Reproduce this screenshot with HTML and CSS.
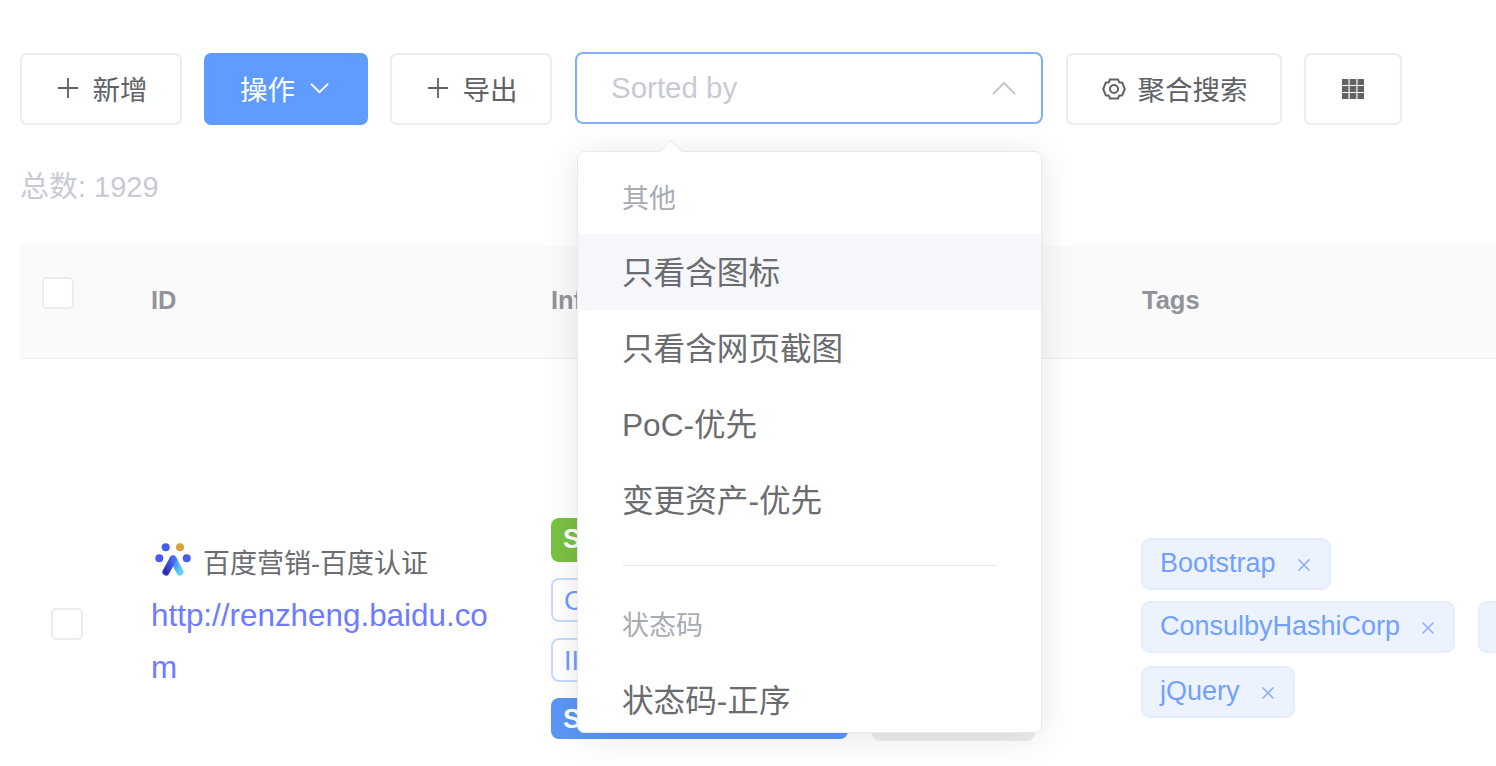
FILE: index.html
```html
<!DOCTYPE html>
<html lang="zh-CN">
<head>
<meta charset="utf-8">
<title>资产列表</title>
<link rel="stylesheet" href="styles.css">
</head>
<body>
<main class="page">
  <div class="toolbar">
    <button class="btn btn-add"><svg class="ic-plus" viewBox="0 0 24 24"><path d="M12 1v22M1 12h22"/></svg>新增</button>
    <button class="btn btn-primary">操作<svg class="ic-chev" viewBox="0 0 24 14"><path d="M2 2l10 10L22 2"/></svg></button>
    <button class="btn btn-add"><svg class="ic-plus" viewBox="0 0 24 24"><path d="M12 1v22M1 12h22"/></svg>导出</button>
    <div class="select-wrap">
      <div class="select">
        <span class="placeholder">Sorted by</span>
        <svg class="ic-up" viewBox="0 0 26 16"><path d="M2 14L13 3l11 11"/></svg>
      </div>
      <div class="dropdown">
        <span class="arrow"></span>
        <div class="menu">
          <div class="group-title">其他</div>
          <div class="item hover">只看含图标</div>
          <div class="item">只看含网页截图</div>
          <div class="item">PoC-优先</div>
          <div class="item">变更资产-优先</div>
          <div class="divider"></div>
          <div class="group-title second">状态码</div>
          <div class="item">状态码-正序</div>
        </div>
      </div>
    </div>
    <button class="btn btn-search"><svg class="ic-gear" viewBox="0 0 24 24"><path d="M8 2.500h8l1.200 2.800 3 .4L22.800 12l-2.600 6.300-3 .4L16 21.500H8l-1.200-2.800-3-.4L1.200 12l2.600-6.300 3-.4z"/><circle cx="12" cy="12" r="4"/></svg>聚合搜索</button>
    <button class="btn btn-grid"><svg class="ic-grid" viewBox="0 0 22 20"><path d="M0 0h6.500v6H0zM7.700 0h6.600v6H7.700zM15.500 0H22v6h-6.500zM0 7h6.500v6H0zM7.700 7h6.600v6H7.700zM15.500 7H22v6h-6.500zM0 14h6.500v6H0zM7.700 14h6.600v6H7.700zM15.500 14H22v6h-6.500z"/></svg></button>
  </div>

  <div class="total">总数: 1929</div>

  <div class="table">
    <div class="thead">
      <div class="col-check"><span class="checkbox head-check"></span></div>
      <div class="col-id th">ID</div>
      <div class="col-info th">Info</div>
      <div class="col-status th"></div>
      <div class="col-tags th th-tags">Tags</div>
    </div>
    <div class="tbody">
      <div class="col-check cell-check"><span class="checkbox"></span></div>
      <div class="col-id cell-id">
        <div class="site">
          <svg class="logo" viewBox="0 0 36 34">
            <defs>
              <linearGradient id="lg-left" x1="0" y1="1" x2="1" y2="0"><stop offset="0" stop-color="#2a2fb8"/><stop offset="1" stop-color="#4a6cf0"/></linearGradient>
              <linearGradient id="lg-right" x1="0" y1="0" x2="1" y2="1"><stop offset="0" stop-color="#4a78f0"/><stop offset="1" stop-color="#5cd4f0"/></linearGradient>
            </defs>
            <circle cx="10.700" cy="4.300" r="4" fill="#4a5cf0"/>
            <circle cx="25" cy="4.300" r="4" fill="#d9a03c"/>
            <circle cx="4.300" cy="15.300" r="4" fill="#4a5cf0"/>
            <circle cx="31.700" cy="15.300" r="4" fill="#4a5cf0"/>
            <path d="M18 16l7 13" stroke="url(#lg-right)" stroke-width="7" stroke-linecap="round" fill="none"/>
            <path d="M18 16l-7 13" stroke="url(#lg-left)" stroke-width="7" stroke-linecap="round" fill="none"/>
          </svg>
          <span>百度营销-百度认证</span>
        </div>
        <a class="url">http://renzheng.baidu.com</a>
      </div>
      <div class="col-info cell-info">
        <span class="tag tag-green">S</span>
        <span class="tag tag-line">C</span>
        <span class="tag tag-line">II</span>
        <span class="tag tag-blue">S</span>
      </div>
      <div class="col-status cell-status">
        <span class="tag-grey"></span>
      </div>
      <div class="col-tags cell-tags">
        <div class="tag-row"><span class="chip">Bootstrap<svg class="x" viewBox="0 0 14 14"><path d="M1.500 1.500l11 11M12.500 1.500l-11 11"/></svg></span></div>
        <div class="tag-row"><span class="chip">ConsulbyHashiCorp<svg class="x" viewBox="0 0 14 14"><path d="M1.500 1.500l11 11M12.500 1.500l-11 11"/></svg></span><span class="chip chip-cut"></span></div>
        <div class="tag-row"><span class="chip">jQuery<svg class="x" viewBox="0 0 14 14"><path d="M1.500 1.500l11 11M12.500 1.500l-11 11"/></svg></span></div>
      </div>
    </div>
  </div>
</main>
</body>
</html>
```
FILE: styles.css
```css
* { box-sizing: border-box; }
html, body {
  margin: 0;
  height: 100%;
  overflow: hidden;
  background: #fff;
}
body {
  font-family: "Liberation Sans", "Noto Sans CJK SC", sans-serif;
  color: #606266;
}
.page {
  width: 1496px;
  height: 766px;
  overflow: hidden;
  padding: 53px 0 0 20px;
}
.toolbar {
  display: flex;
  align-items: flex-start;
  gap: 22px;
}
.btn {
  height: 72px;
  border: 2px solid #ebebf2;
  border-radius: 7px;
  background: #fff;
  color: #606266;
  font: 27.500px "Liberation Sans", "Noto Sans CJK SC", sans-serif;
  display: flex;
  align-items: center;
  justify-content: center;
  padding: 0 0 3px;
}
.btn-add { width: 162px; gap: 14px; padding-left: 2px; }
.btn-primary {
  width: 164px;
  gap: 14px;
  padding-right: 2px;
  background: #609bff;
  border-color: #609bff;
  color: #fff;
}
.btn-search { width: 216px; gap: 12px; margin-left: 1px; padding-left: 1px; }
.btn-grid { width: 98px; }
.ic-plus { width: 22px; height: 22px; fill: none; stroke: #606266; stroke-width: 2; }
.ic-chev { width: 21px; height: 12px; fill: none; stroke: #fff; stroke-width: 2.200; }
.ic-gear { width: 24px; height: 24px; margin-top: 2px; fill: none; stroke: #606266; stroke-width: 2; }
.ic-grid { width: 22px; height: 20px; margin-top: 2px; fill: #606266; }

.select-wrap { position: relative; width: 468px; margin-left: 1px; }
.select {
  height: 72px;
  margin-top: -1px;
  border: 2px solid #7fb0fb;
  border-radius: 8px;
  display: flex;
  align-items: center;
  justify-content: space-between;
  padding: 0 24px 0 34px;
  background: #fff;
}
.placeholder { font-size: 29.500px; color: #c8cad3; }
.ic-up { width: 26px; height: 16px; fill: none; stroke: #c4c6cf; stroke-width: 2; }

.dropdown {
  position: absolute;
  z-index: 5;
  left: 2px;
  top: 98px;
  width: 465px;
  height: 582px;
  background: #fff;
  border: 1px solid #e8e9f0;
  border-radius: 7px;
  box-shadow: 0 4px 36px rgba(0, 0, 0, 0.1);
}
.arrow {
  position: absolute;
  left: 85px;
  top: -9px;
  width: 16px;
  height: 16px;
  background: #fff;
  border-left: 1px solid #e8e9f0;
  border-top: 1px solid #e8e9f0;
  transform: rotate(45deg);
}
.menu {
  position: relative;
  height: 100%;
  overflow: hidden;
  border-radius: 7px;
  padding-top: 25px;
}
.group-title {
  height: 44px;
  line-height: 44px;
  padding-left: 44px;
  font-size: 27px;
  color: #a8abb2;
  margin-bottom: 13px;
}
.group-title.second { margin-bottom: 14px; }
.item {
  height: 76px;
  line-height: 78px;
  padding-left: 44px;
  font-size: 31.600px;
  color: #6a6c70;
  white-space: nowrap;
}
.item.hover { background: #f5f7fb; }
.divider {
  height: 1px;
  margin: 27px 44px 38px;
  background: #e8e9f2;
}

.total {
  margin-top: 42px;
  height: 40px;
  line-height: 40px;
  font-size: 29px;
  color: #c8cad3;
}

.table { margin-top: 38px; width: 1600px; }
.thead {
  display: flex;
  height: 114px;
  background: #fafafa;
  border-bottom: 1px solid #ebeef5;
}
.th {
  font-size: 25.500px;
  font-weight: bold;
  color: #909399;
  line-height: 111px;
}
.th-tags { padding-left: 1px; }
.col-check { width: 131px; flex: none; }
.col-id { width: 400px; flex: none; }
.col-info { width: 321px; flex: none; }
.col-status { width: 269px; flex: none; }
.col-tags { flex: 1; }
.checkbox {
  display: block;
  width: 32px;
  height: 32px;
  border: 2px solid #ebebf2;
  border-radius: 5px;
  background: #fff;
}
.head-check { margin: 32px 0 0 22px; }

.tbody { display: flex; }
.cell-check { padding: 249px 0 0 31px; }
.cell-id { padding-top: 176px; font-size: 27px; }
.site {
  display: flex;
  align-items: center;
  gap: 12px;
  height: 52px;
  margin-left: 4px;
  color: #6a6c70;
}
.logo { width: 36px; height: 34px; margin-top: -2px; flex: none; }
.url {
  display: block;
  width: 345px;
  font-size: 31.400px;
  line-height: 52px;
  word-break: break-all;
  color: #6e7bff;
  margin-top: 3px;
}
.cell-info {
  padding-top: 159px;
  display: flex;
  flex-direction: column;
  align-items: flex-start;
  gap: 16px;
}
.tag {
  height: 44px;
  line-height: 42px;
  border-radius: 8px;
  padding: 0 12px;
  font-size: 27px;
  white-space: nowrap;
}
.tag-green { background: #7ac143; color: #fff; font-weight: bold; width: 200px; }
.tag-line { border: 2px solid #c9dcff; color: #6e9cff; background: #fff; width: 200px; padding-left: 11px; }
.tag-blue {
  background: #5b96f7;
  color: #fff;
  font-weight: bold;
  width: 297px;
  height: 41px;
}
.cell-status { padding-top: 330px; }
.tag-grey {
  display: block;
  width: 163px;
  height: 52px;
  border-radius: 8px;
  background: #eeeeee;
}
.cell-tags { padding-top: 179px; }
.tag-row { display: flex; gap: 23px; margin-bottom: 13px; }
.tag-row:first-child { margin-bottom: 11px; }
.chip {
  display: inline-flex;
  align-items: center;
  height: 52px;
  padding: 0 18px 1px 17px;
  border: 2px solid #e4edff;
  border-radius: 9px;
  background: #ecf3ff;
  color: #72a0ff;
  font-size: 27px;
  white-space: nowrap;
}
.chip-cut { width: 120px; }
.x {
  width: 14px;
  height: 14px;
  margin: 2px 0 0 21px;
  fill: none;
  stroke: #8eb0fb;
  stroke-width: 1.600;
}
```
